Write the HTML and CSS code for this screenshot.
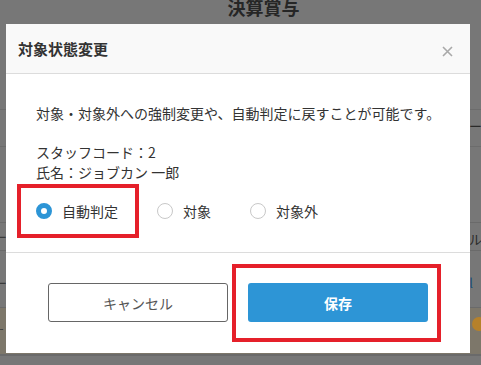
FILE: index.html
```html
<!DOCTYPE html>
<html lang="ja">
<head>
    <meta charset="UTF-8">
    <title>決算賞与</title>
    <link rel="stylesheet" href="styles.css">
</head>
<body>
    <div class="page">
        <h1 class="page-title">決算賞与</h1>
        <div class="rows">
            <div class="row row-tool"><span class="cell-end">ツール</span></div>
            <div class="row row-gap"></div>
            <div class="row row-rule"><span class="cell-start">ー</span><span class="cell-end">ルー</span></div>
            <div class="row row-link"><span class="cell-start">ー</span><span class="cell-end link">l</span></div>
            <div class="row row-total"><span class="cell-start">ー</span><span class="coin"></span></div>
        </div>
    </div>

    <div class="modal">
        <div class="modal-header">
            <div class="modal-title">対象状態変更</div>
            <button class="close">
                <svg width="11" height="11" viewBox="0 0 11 11">
                    <path d="M1 1 L10 10 M10 1 L1 10" stroke="#a9a9a9" stroke-width="1.6" fill="none"/>
                </svg>
            </button>
        </div>
        <div class="modal-body">
            <p class="lead">対象・対象外への強制変更や、自動判定に戻すことが可能です。</p>
            <p class="info">スタッフコード：2<br>氏名：ジョブカン 一郎</p>
            <div class="radios">
                <label class="radio"><span class="circle checked"></span>自動判定</label>
                <label class="radio"><span class="circle"></span>対象</label>
                <label class="radio"><span class="circle"></span>対象外</label>
            </div>
        </div>
        <div class="modal-footer">
            <button class="btn btn-cancel">キャンセル</button>
            <button class="btn btn-save">保存</button>
        </div>
    </div>

    <div class="mark mark-radio"></div>
    <div class="mark mark-save"></div>
</body>
</html>
```

FILE: styles.css
```css
body {
    margin: 0;
    width: 481px;
    height: 365px;
    overflow: hidden;
    background: #777777;
    font-family: "Noto Sans CJK JP", "Noto Sans", sans-serif;
    color: #333;
    position: relative;
}

.page {
    height: 365px;
}

.page-title {
    margin: -5px 0 0 46px;
    height: 24px;
    font-size: 18px;
    line-height: 24px;
    font-weight: bold;
    text-align: center;
    color: #262626;
}

.rows {
    margin-top: 90px;
}

.row {
    display: flex;
    align-items: flex-start;
    font-size: 13px;
    line-height: 16px;
    color: #2a2a2a;
}

.row-tool {
    height: 36px;
    border-top: 1px solid #6c6c6c;
    border-bottom: 1px solid #6c6c6c;
}

.row-gap {
    height: 75px;
}

.row-rule {
    height: 27px;
    border-top: 1px solid #6a6a6a;
    border-bottom: 1px solid #6a6a6a;
}

.row-link {
    height: 56px;
    border-bottom: 1px solid #6a6a6a;
}

.row-total {
    height: 46px;
    background: #7d776a;
    border-bottom: 2px solid #6a6a6a;
}

.cell-start {
    margin: 6px 0 0 -6px;
    color: #3a3a3a;
}

.cell-end {
    margin: 8px -14px 0 auto;
}

.row-link .cell-start,
.row-link .cell-end {
    margin-top: 24px;
}

.link {
    color: #1d4f7a;
    margin-right: 8px;
}

.row-total .cell-start {
    margin-top: 16px;
    font-size: 10px;
    line-height: 12px;
}

.coin {
    width: 14px;
    height: 14px;
    border-radius: 50%;
    background: #b6812a;
    margin: 9px -5px 0 auto;
}

.modal {
    position: absolute;
    left: 6px;
    top: 24px;
    width: 464px;
    background: #fff;
}

.modal-header {
    height: 49px;
    background: #f9f9f9;
    border-bottom: 1px solid #dcdcdc;
    display: flex;
    align-items: center;
    justify-content: space-between;
    padding: 0 17px 0 12px;
}

.modal-title {
    font-size: 15px;
    font-weight: bold;
    color: #333;
}

.close {
    border: none;
    background: none;
    padding: 5px 0 0 0;
    line-height: 0;
}

.modal-body {
    padding: 29px 20px 31px 30px;
    font-size: 14px;
    line-height: 20px;
}

.modal-body p {
    margin: 0 0 19px 0;
}

.lead {
    white-space: nowrap;
}

.radios {
    display: flex;
    gap: 39px;
}

.radio {
    display: flex;
    align-items: center;
    gap: 10px;
}

.circle {
    width: 14px;
    height: 14px;
    border-radius: 50%;
    border: 1px solid #c8c8c8;
    background: #fff;
    box-sizing: content-box;
}

.circle.checked {
    width: 6px;
    height: 6px;
    border: 5px solid #2d95d6;
}

.modal-footer {
    border-top: 1px solid #dcdcdc;
    padding: 30px 0 31px 0;
    display: flex;
    justify-content: center;
    gap: 20px;
}

.btn {
    width: 180px;
    height: 39px;
    border-radius: 3px;
    font-family: "Noto Sans CJK JP", "Noto Sans", sans-serif;
    font-size: 14px;
}

.btn-cancel {
    background: #fff;
    border: 1px solid #666;
    color: #555;
}

.btn-save {
    background: #2d95d6;
    border: none;
    color: #fff;
    font-weight: bold;
}

.mark {
    position: absolute;
    border: 4px solid #e5202a;
    box-sizing: border-box;
}

.mark-radio {
    left: 17px;
    top: 184px;
    width: 122px;
    height: 54px;
}

.mark-save {
    left: 232px;
    top: 264px;
    width: 209px;
    height: 78px;
}
```
